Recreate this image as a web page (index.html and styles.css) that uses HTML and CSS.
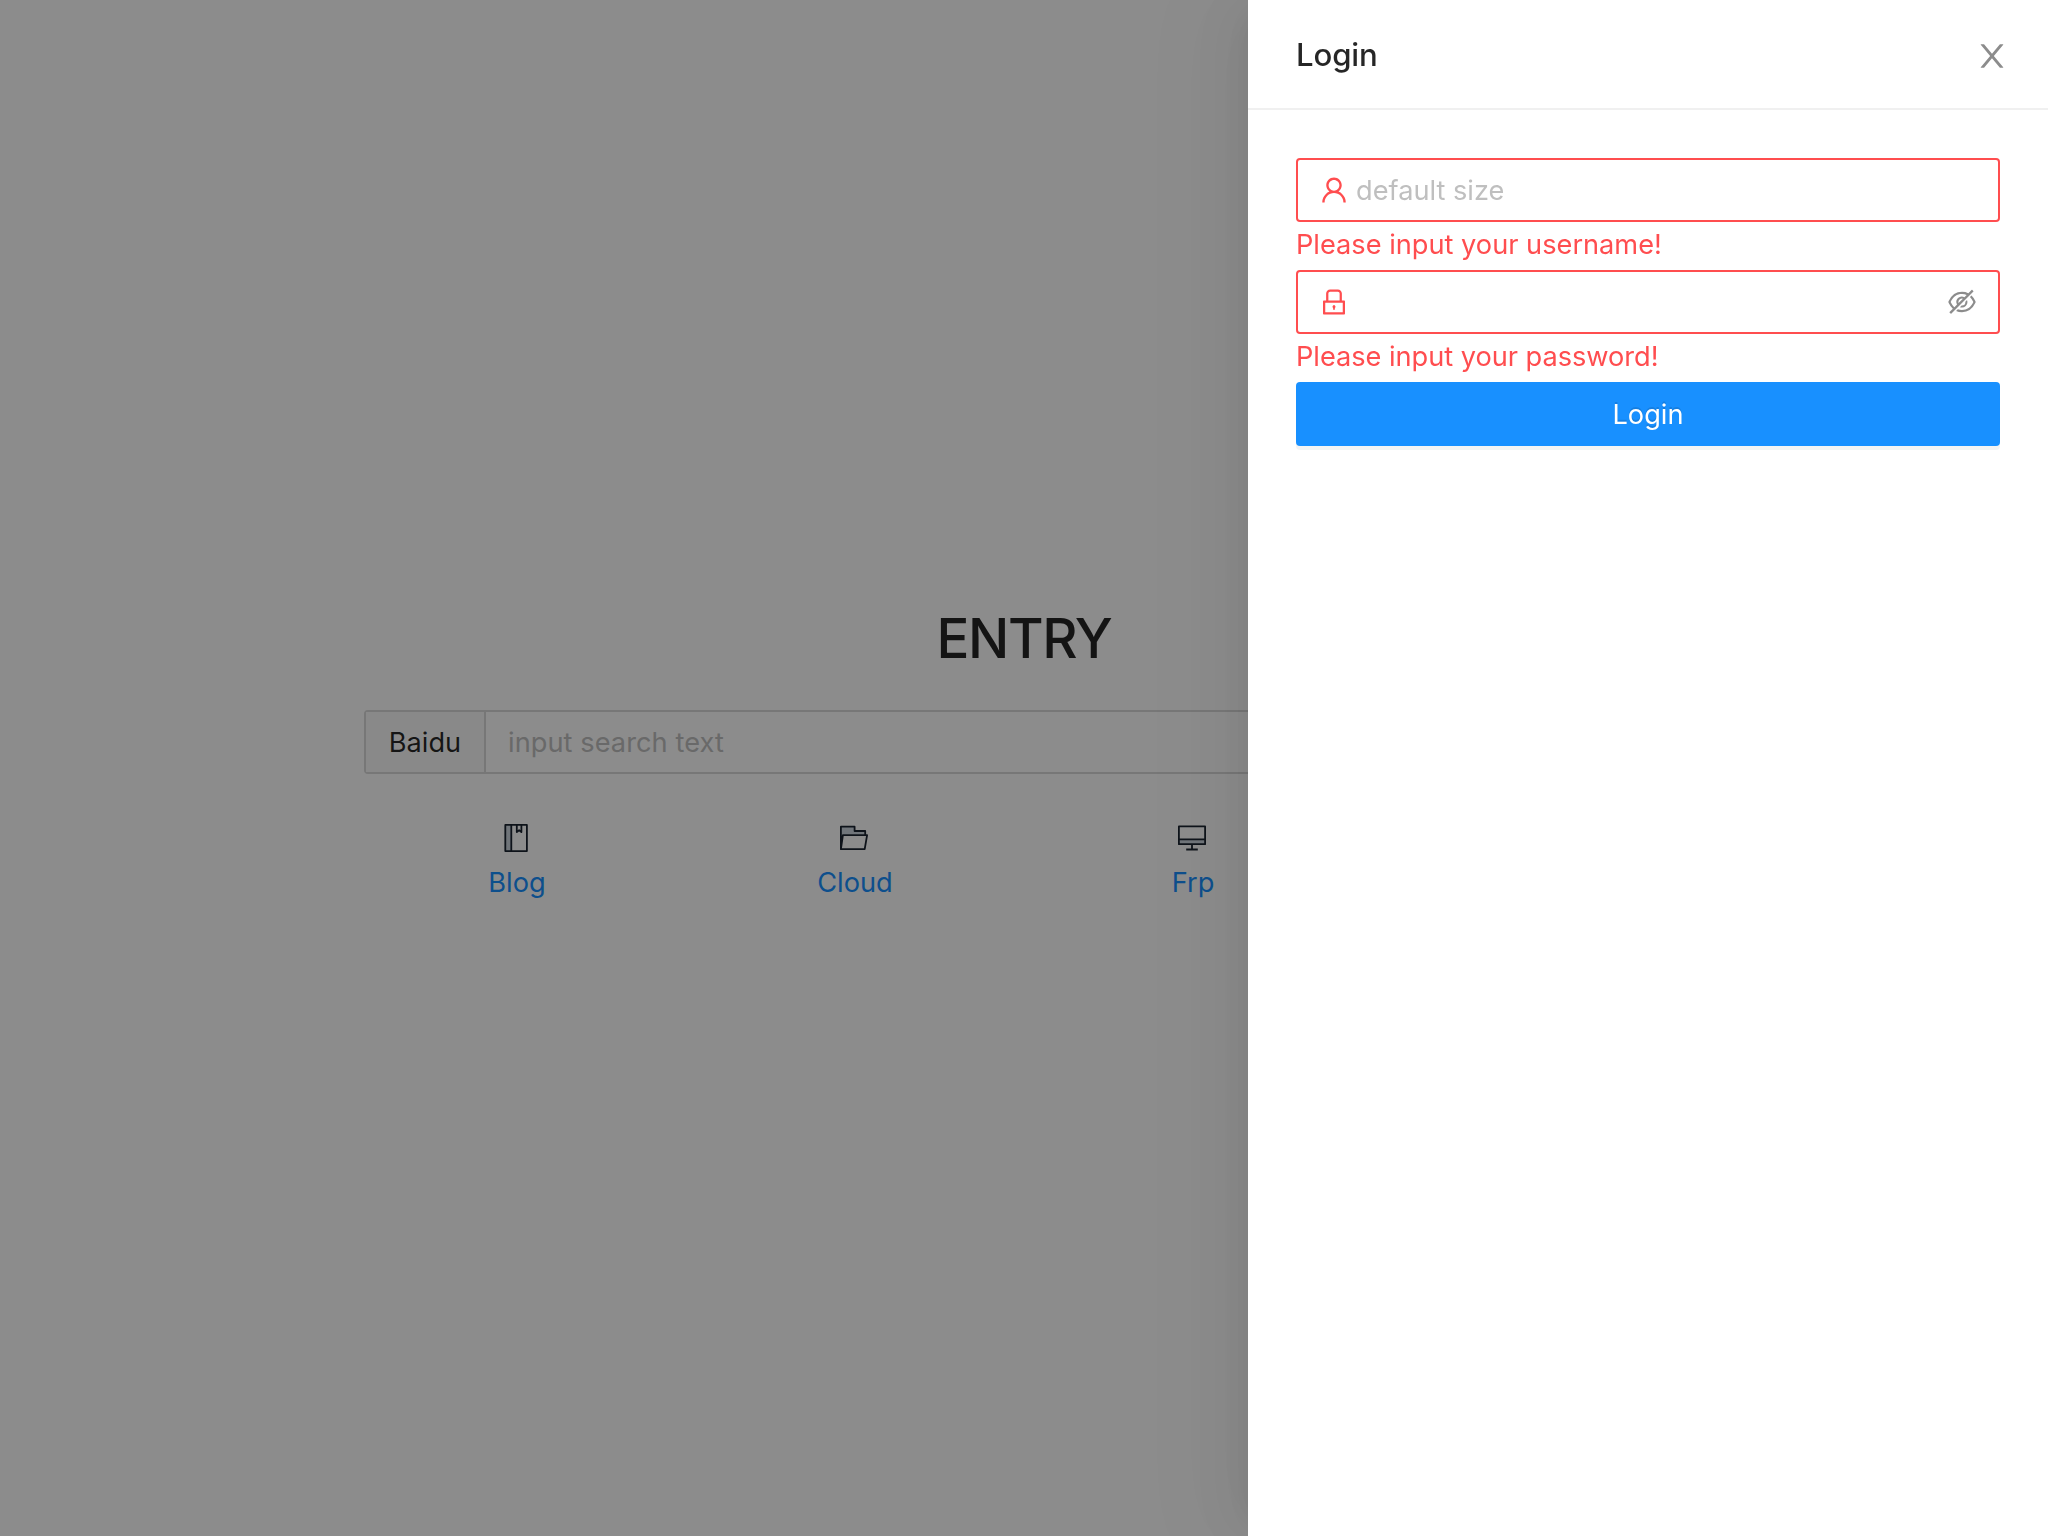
FILE: index.html
```html
<!DOCTYPE html>
<html lang="en">
<head>
<meta charset="utf-8">
<title>Entry</title>
<link rel="stylesheet" href="styles.css">
</head>
<body>
<main class="page">
  <h1 class="page-title">ENTRY</h1>
  <div class="search">
    <span class="search-addon">Baidu</span>
    <span class="search-input">input search text</span>
  </div>
  <nav class="links">
    <a class="link" href="#">
      <svg class="link-icon" viewBox="0 0 28 28"><path class="tone" d="M3.3 1h6v26h-6z"/><path d="M3.3.9h21.6v26.2H3.3zM9.3.9v26.2M14.8.9v7.2l2.3-1.9 2.3 1.9V.9"/></svg>
      <span class="link-text">Blog</span>
    </a>
    <a class="link" href="#">
      <svg class="link-icon" viewBox="0 0 28 28"><path class="tone" d="M.8 2.6h13.6v4.2h10.8v4H2.6L.8 25.2z"/><path d="M.9 25.2V2.7h13.7V7h10.6v4M.9 25.2 2.9 11.1h24.2l-2.4 14.1z"/></svg>
      <span class="link-text">Cloud</span>
    </a>
    <a class="link" href="#">
      <svg class="link-icon" viewBox="0 0 28 28"><path class="tone" d="M.8 15.4h26.4v4.8H.8z"/><path d="M.9 2.4h26.2v17.8H.9zM.9 15.4h26.2M14 20.2v5.3M8.2 25.5h11.6"/></svg>
      <span class="link-text">Frp</span>
    </a>
  </nav>
</main>
<div class="mask"></div>
<aside class="drawer">
  <header class="drawer-header">
    <h2 class="drawer-title">Login</h2>
    <svg class="close" viewBox="64 64 896 896"><path d="M563.8 512l262.5-312.9c4.4-5.2.7-13.1-6.1-13.1h-79.8c-4.7 0-9.2 2.1-12.3 5.7L511.6 449.8 295.1 191.7c-3-3.6-7.5-5.7-12.3-5.7H203c-6.8 0-10.5 7.9-6.1 13.1L459.4 512 196.9 824.9A7.95 7.95 0 00203 838h79.8c4.7 0 9.2-2.1 12.3-5.7l216.5-258.1 216.5 258.1c3 3.6 7.5 5.7 12.3 5.7h79.8c6.8 0 10.5-7.9 6.1-13.1L563.8 512z"/></svg>
  </header>
  <form class="form">
    <div class="field">
      <svg class="icon" viewBox="64 64 896 896"><path d="M858.5 763.6a374 374 0 00-80.6-119.5 375.63 375.63 0 00-119.5-80.6c-.4-.2-.8-.3-1.2-.5C719.5 518 760 444.7 760 362c0-137-111-248-248-248S264 225 264 362c0 82.7 40.5 156 102.8 201.1-.4.2-.8.3-1.2.5-44.8 18.9-85 46-119.5 80.6a375.63 375.63 0 00-80.6 119.5A371.7 371.7 0 00136 901.8a8 8 0 008 8.2h60c4.4 0 7.9-3.5 8-7.8 2-77.2 33-149.5 87.8-204.3 56.7-56.7 132-87.9 212.2-87.9s155.5 31.2 212.2 87.9C779 752.7 810 825 812 902.2c.1 4.4 3.6 7.8 8 7.8h60a8 8 0 008-8.2c-1-47.8-10.9-94.3-29.5-138.2zM512 534c-45.9 0-89.1-17.9-121.6-50.4S340 407.9 340 362c0-45.9 17.9-89.1 50.4-121.6S466.1 190 512 190s89.1 17.9 121.6 50.4S684 316.1 684 362c0 45.9-17.9 89.1-50.4 121.6S557.9 534 512 534z"/></svg>
      <span class="placeholder">default size</span>
    </div>
    <p class="error">Please input your username!</p>
    <div class="field">
      <svg class="icon" viewBox="64 64 896 896"><path d="M832 464h-68V240c0-70.7-57.3-128-128-128H388c-70.7 0-128 57.3-128 128v224h-68c-17.7 0-32 14.3-32 32v384c0 17.7 14.3 32 32 32h640c17.7 0 32-14.3 32-32V496c0-17.7-14.3-32-32-32zM332 240c0-30.9 25.1-56 56-56h248c30.9 0 56 25.1 56 56v224H332V240zm460 600H232V536h560v304zM484 701v53c0 4.4 3.6 8 8 8h40c4.4 0 8-3.6 8-8v-53a48.01 48.01 0 10-56 0z"/></svg>
      <svg class="icon icon-eye" viewBox="64 64 896 896"><path d="M942.2 486.2Q889.47 375.11 816.7 305l-50.88 50.88C807.31 395.53 843.45 447.4 874.7 512 791.5 684.2 673.4 766 512 766q-72.67 0-133.87-22.38L323 798.75Q408 838 512 838q288.3 0 430.2-300.3a60.29 60.29 0 000-51.5zm-63.57-320.64L836 122.88a8 8 0 00-11.32 0L715.31 232.2Q624.86 186 512 186q-288.3 0-430.2 300.3a60.3 60.3 0 000 51.5q56.69 119.4 136.5 191.41L112.48 835a8 8 0 000 11.31L155.17 889a8 8 0 0011.31 0l712.15-712.12a8 8 0 000-11.32zM149.3 512C232.6 339.8 350.7 258 512 258c54.54 0 104.13 9.36 149.12 28.39l-70.3 70.3a176 176 0 00-238.13 238.13l-83.42 83.42C223.1 637.49 183.3 582.28 149.3 512zm246.7 0a112.11 112.11 0 01146.2-106.69L401.31 546.2A112 112 0 01396 512z"/><path d="M508 624c-3.46 0-6.87-.16-10.25-.47l-52.82 52.82a176.09 176.09 0 00227.42-227.42l-52.82 52.82c.31 3.38.47 6.79.47 10.25a111.94 111.94 0 01-112 112z"/></svg>
    </div>
    <p class="error error-password">Please input your password!</p>
    <button class="submit" type="button">Login</button>
  </form>
</aside>
</body>
</html>
```
FILE: styles.css
```css
* {
  box-sizing: border-box;
}

body {
  margin: 0;
  height: 1536px;
  overflow: hidden;
  background: #fff;
  color: rgba(0, 0, 0, 0.85);
  font-family: Inter, "Liberation Sans", sans-serif;
  font-size: 27.2px;
  line-height: 44px;
}

h1,
h2,
p {
  margin: 0;
}

.page {
  padding: 602px 364px 0;
}

.page-title {
  height: 108px;
  font-size: 54.6px;
  font-weight: 500;
  line-height: 72px;
  letter-spacing: -1.4px;
  text-align: center;
}

.search {
  display: flex;
  height: 64px;
  border: 2px solid #d9d9d9;
  border-radius: 4px;
}

.search-addon {
  flex: none;
  width: 120px;
  padding: 9px 0 7px;
  border-right: 2px solid #d9d9d9;
  background: #fafafa;
  text-align: center;
}

.search-input {
  padding: 9px 22px 7px;
  color: #bfbfbf;
  letter-spacing: 0.06px;
}

.links {
  display: grid;
  grid-template-columns: repeat(4, 338px);
  margin: 50px -17px 0;
}

.link {
  display: flex;
  flex-direction: column;
  align-items: center;
  color: #1890ff;
  text-decoration: none;
}

.link-icon {
  width: 28px;
  height: 28px;
  margin-bottom: 9px;
  fill: none;
  stroke: #1a2430;
  stroke-width: 1.8;
  stroke-linejoin: round;
}

.link-icon .tone {
  fill: #ccd5de;
  stroke: none;
}

.link-text {
  margin-left: 2px;
}

.mask {
  position: fixed;
  inset: 0;
  background: rgba(0, 0, 0, 0.45);
}

.drawer {
  position: fixed;
  top: 0;
  right: 0;
  bottom: 0;
  width: 800px;
  background: #fff;
  box-shadow: -12px 0 32px -16px rgba(0, 0, 0, 0.08), -18px 0 56px 0 rgba(0, 0, 0, 0.05), -24px 0 96px 32px rgba(0, 0, 0, 0.03);
}

.drawer-header {
  display: flex;
  align-items: center;
  justify-content: space-between;
  height: 110px;
  padding: 4px 40px 0 48px;
  border-bottom: 2px solid #f0f0f0;
}

.drawer-title {
  margin-top: -2px;
  font-size: 31.2px;
  font-weight: 500;
  letter-spacing: -0.15px;
}

.close {
  width: 32px;
  height: 32px;
  fill: #8c8c8c;
}

.form {
  padding: 48px;
}

.field {
  display: flex;
  align-items: center;
  gap: 8px;
  height: 64px;
  padding: 0 22px;
  border: 2px solid #ff4d4f;
  border-radius: 4px;
}

.icon {
  flex: none;
  width: 28px;
  height: 28px;
  fill: #ff4d4f;
}

.icon-eye {
  margin-left: auto;
  fill: #8c8c8c;
}

.placeholder {
  padding-top: 2px;
  color: #bfbfbf;
}

.error {
  height: 48px;
  padding-top: 1px;
  color: #ff4d4f;
}

.error-password {
  letter-spacing: -0.03px;
}

.submit {
  display: block;
  width: 100%;
  height: 64px;
  padding: 2px 0 0;
  border: 0;
  border-radius: 4px;
  background: #1890ff;
  box-shadow: 0 4px 0 rgba(0, 0, 0, 0.045);
  color: #fff;
  font: inherit;
  text-shadow: 0 -2px 0 rgba(0, 0, 0, 0.12);
}
```
